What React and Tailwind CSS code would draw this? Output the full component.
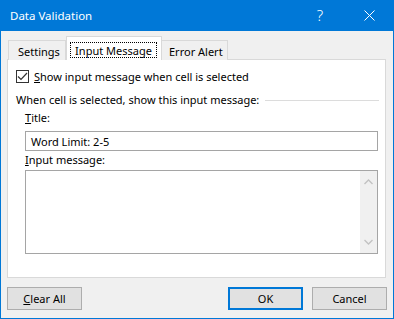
export default function App() {
  return (
    <div className="w-[394px] h-[319px] bg-[#f0f0f0] border border-t-0 border-[#0078d7] flex flex-col text-[11px] leading-none text-black font-['Segoe_UI','Noto_Sans',sans-serif]">
      {/* Title bar */}
      <div className="h-[31px] bg-[#0078d7] -mx-px flex items-center text-white shrink-0">
        <span className="ml-[10px] text-[11.5px]">Data Validation</span>
        <span className="ml-auto mr-[41px] text-[15px] font-light">?</span>
        <svg width="11" height="11" viewBox="0 0 11 11" className="mr-[19px]">
          <path d="M0.5 0.5 L10.5 10.5 M10.5 0.5 L0.5 10.5" stroke="white" strokeWidth="1" />
        </svg>
      </div>

      {/* Tabs */}
      <div className="mt-[6px] ml-[7px] flex items-end h-[23px] relative z-10 -mb-px">
        <div className="h-[20px] w-[58px] border border-b-0 border-[#d9d9d9] bg-[#f0f0f0] flex items-center pl-[9px] pt-[1px]">
          Settings
        </div>
        <div className="h-[24px] w-[96px] border border-b-0 border-[#d9d9d9] bg-white flex items-start pl-[3px] pt-[5px]">
          <div className="border border-dotted border-black h-[16px] w-[87px] flex items-center justify-center">
            Input Message
          </div>
        </div>
        <div className="h-[20px] w-[66px] border border-b-0 border-l-0 border-[#d9d9d9] bg-[#f0f0f0] flex items-center pl-[7px] pt-[1px]">
          Error Alert
        </div>
      </div>

      {/* Panel */}
      <div className="ml-[6px] w-[379px] h-[219px] bg-white border border-[#d9d9d9] flex flex-col shrink-0">
        <div className="mt-[10px] ml-[8px] flex items-center h-[13px]">
          <div className="w-[13px] h-[13px] border border-[#333333] bg-white flex items-center justify-center">
            <svg width="11" height="11" viewBox="0 0 11 11">
              <path d="M1 5.5 L4 8.5 L10 2" stroke="#333333" strokeWidth="1.2" fill="none" />
            </svg>
          </div>
          <span className="ml-[5px]">
            <u>S</u>how input message when cell is selected
          </span>
        </div>

        <div className="mt-[9px] ml-[8px] flex items-center h-[14px]">
          <span className="whitespace-nowrap">When cell is selected, show this input message:</span>
          <div className="flex-1 h-px bg-[#dcdcdc] ml-[6px] mr-[6px] mt-[2px]"></div>
        </div>

        <div className="mt-[5px] ml-[17px] h-[12px] flex items-center">
          <span>
            <u>T</u>itle:
          </span>
        </div>
        <div className="mt-[8px] ml-[17px] w-[353px] h-[20px] border border-[#a5a5a5] flex items-center pl-[5px]">
          Word Limit: 2-5
        </div>

        <div className="mt-[1px] ml-[17px] h-[14px] flex items-center">
          <span>
            <u>I</u>nput message:
          </span>
        </div>
        <div className="mt-[4px] ml-[17px] w-[353px] h-[84px] border border-[#a5a5a5] flex justify-end">
          <div className="w-[17px] h-full bg-[#f0f0f0] flex flex-col items-center justify-between py-[8px]">
            <svg width="9" height="6" viewBox="0 0 9 6">
              <path d="M0.5 5 L4.5 1 L8.5 5" stroke="#c2c2c2" strokeWidth="1.3" fill="none" />
            </svg>
            <svg width="9" height="6" viewBox="0 0 9 6">
              <path d="M0.5 1 L4.5 5 L8.5 1" stroke="#c2c2c2" strokeWidth="1.3" fill="none" />
            </svg>
          </div>
        </div>
      </div>

      {/* Buttons */}
      <div className="mt-[9px] ml-[6px] mr-[6px] flex items-center">
        <div className="w-[75px] h-[23px] bg-[#e1e1e1] border border-[#adadad] flex items-center justify-center">
          <span>
            <u>C</u>lear All
          </span>
        </div>
        <div className="ml-auto w-[75px] h-[23px] bg-[#e1e1e1] border-2 border-[#0078d7] flex items-center justify-center">
          OK
        </div>
        <div className="ml-[9px] w-[75px] h-[23px] bg-[#e1e1e1] border border-[#adadad] flex items-center justify-center">
          Cancel
        </div>
      </div>
    </div>
  );
}
